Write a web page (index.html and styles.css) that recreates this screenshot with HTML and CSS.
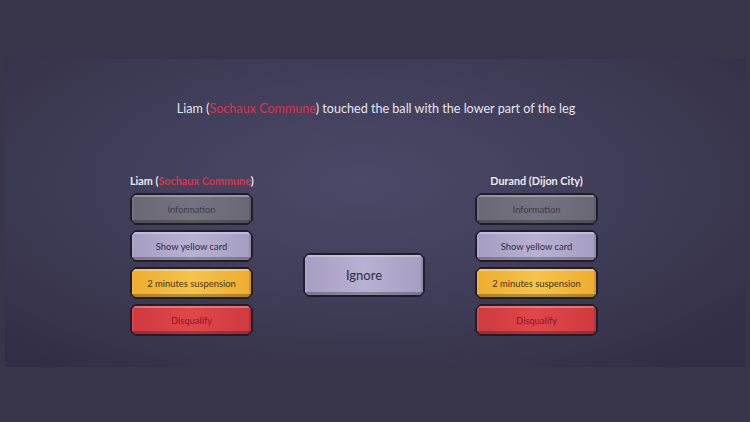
FILE: index.html
```html
<!DOCTYPE html>
<html>
<head>
<meta charset="utf-8">
<link rel="stylesheet" href="styles.css">
</head>
<body>
<div class="panel">
  <p class="title">Liam (<span class="red">Sochaux Commune</span>) touched the ball with the lower part of the leg</p>
  <div class="row">
    <div class="col">
      <div class="label">Liam (<span class="red">Sochaux Commune</span>)</div>
      <div class="btn gray"><span class="face">Information</span></div>
      <div class="btn lav"><span class="face">Show yellow card</span></div>
      <div class="btn yel"><span class="face">2 minutes suspension</span></div>
      <div class="btn redb"><span class="face">Disqualify</span></div>
    </div>
    <div class="mid">
      <div class="btn lav big"><span class="face">Ignore</span></div>
    </div>
    <div class="col">
      <div class="label">Durand (Dijon City)</div>
      <div class="btn gray"><span class="face">Information</span></div>
      <div class="btn lav"><span class="face">Show yellow card</span></div>
      <div class="btn yel"><span class="face">2 minutes suspension</span></div>
      <div class="btn redb"><span class="face">Disqualify</span></div>
    </div>
  </div>
</div>
</body>
</html>
```

FILE: styles.css
```css
html, body {
  margin: 0;
  padding: 0;
}
body {
  width: 750px;
  height: 422px;
  background: #393549;
  font-family: "Lato", "Open Sans", sans-serif;
  overflow: hidden;
  padding-top: 59px;
  box-sizing: border-box;
}
.panel {
  margin: 0 5px;
  height: 308px;
  background: radial-gradient(ellipse 70% 75% at 48% 40%, #4b4968 0%, #403d58 50%, #322f44 100%);
  box-sizing: border-box;
  padding-top: 40px;
}
.title {
  margin: 0;
  text-align: center;
  color: #e6e4ee;
  font-size: 12.6px;
  line-height: 20px;
  padding-left: 2px;
  white-space: nowrap;
}
.red { color: #d8364a; }
.row {
  display: flex;
  gap: 50px;
  padding-left: 125px;
  margin-top: 54px;
}
.col {
  width: 123px;
  display: flex;
  flex-direction: column;
  gap: 5px;
}
.label {
  text-align: center;
  color: #ecebf2;
  font-weight: 700;
  font-size: 10.8px;
  line-height: 15px;
  white-space: nowrap;
}
.mid {
  width: 122px;
  padding-top: 80px;
}
.btn {
  height: 32px;
  padding: 2px;
  box-sizing: border-box;
  background: #211e2c;
  clip-path: polygon(5px 0, calc(100% - 5px) 0, 100% 5px, 100% calc(100% - 5px), calc(100% - 5px) 100%, 5px 100%, 0 calc(100% - 5px), 0 5px);
}
.btn.big { height: 44px; }
.face {
  display: flex;
  align-items: center;
  justify-content: center;
  height: 100%;
  font-size: 9.4px;
  white-space: nowrap;
  clip-path: polygon(3px 0, calc(100% - 3px) 0, 100% 3px, 100% calc(100% - 3px), calc(100% - 3px) 100%, 3px 100%, 0 calc(100% - 3px), 0 3px);
  box-shadow: inset 0 2px 0 rgba(255,255,255,0.28), inset 0 -3px 0 rgba(0,0,0,0.25), inset 2px 0 0 rgba(255,255,255,0.08), inset -2px 0 0 rgba(0,0,0,0.12);
}
.big .face { font-size: 13px; }
.gray .face {
  background: linear-gradient(90deg, #6a6874, #75737f 50%, #6a6874);
  color: #3e3c48;
}
.lav .face {
  background: linear-gradient(90deg, #a69ec2, #b8b1d2 50%, #a69ec2);
  color: #2f2b40;
}
.yel .face {
  background: linear-gradient(90deg, #eeac2f, #f6c447 50%, #eeac2f);
  color: #4a3412;
}
.redb .face {
  background: linear-gradient(90deg, #cf3a3e, #e0474a 50%, #cf3a3e);
  color: #7d1c2a;
}
```
